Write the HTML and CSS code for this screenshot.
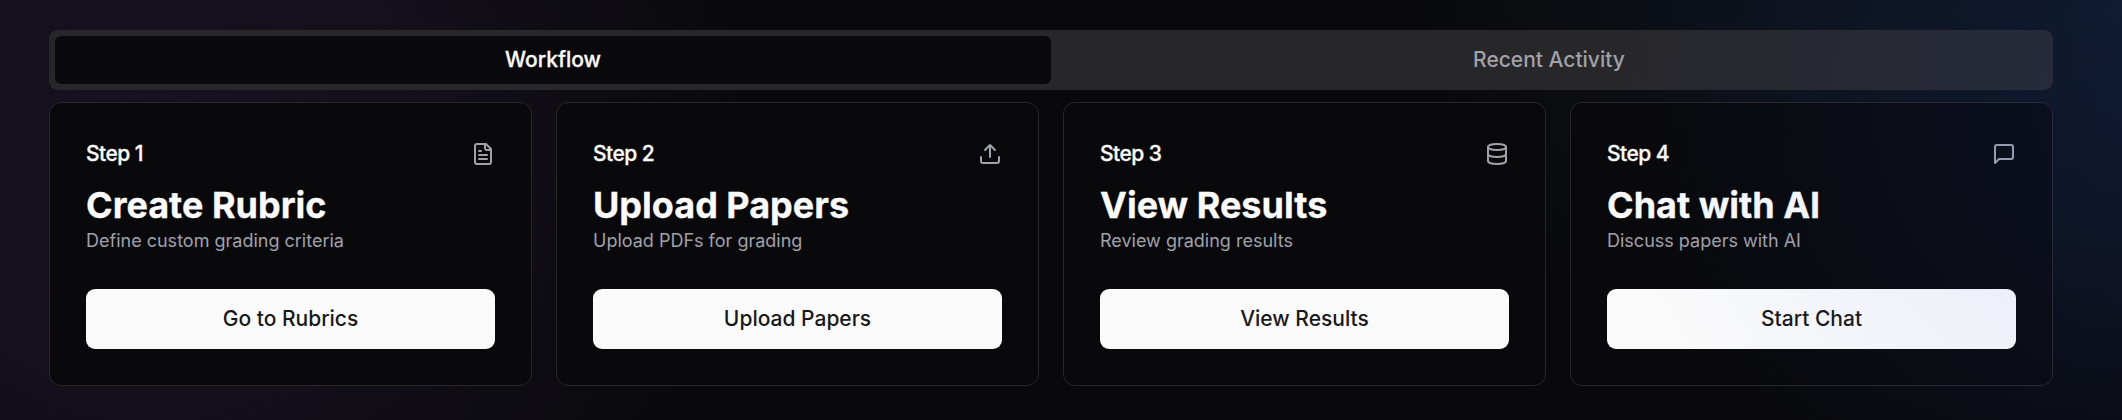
FILE: index.html
```html
<!DOCTYPE html>
<html lang="en">
<head>
<meta charset="utf-8">
<title>Workflow</title>
<link rel="stylesheet" href="styles.css">
</head>
<body>
<main class="dashboard">
  <div class="tabs" role="tablist">
    <button class="tab tab-active" role="tab">Workflow</button>
    <button class="tab" role="tab">Recent Activity</button>
  </div>
  <div class="cards">
    <section class="card">
      <div class="card-head"><span class="step">Step 1</span>
        <svg class="icon" viewBox="0 0 24 24"><path d="M15 2H6a2 2 0 0 0-2 2v16a2 2 0 0 0 2 2h12a2 2 0 0 0 2-2V7Z"/><path d="M14 2v4a2 2 0 0 0 2 2h4M10 9H8M16 13H8M16 17H8"/></svg>
      </div>
      <h2 class="title">Create Rubric</h2>
      <p class="desc">Define custom grading criteria</p>
      <button class="action">Go to Rubrics</button>
    </section>
    <section class="card">
      <div class="card-head"><span class="step">Step 2</span>
        <svg class="icon" viewBox="0 0 24 24"><path d="M21 15v4a2 2 0 0 1-2 2H5a2 2 0 0 1-2-2v-4"/><path d="m17 8-5-5-5 5M12 3v12"/></svg>
      </div>
      <h2 class="title">Upload Papers</h2>
      <p class="desc">Upload PDFs for grading</p>
      <button class="action">Upload Papers</button>
    </section>
    <section class="card">
      <div class="card-head"><span class="step">Step 3</span>
        <svg class="icon" viewBox="0 0 24 24"><ellipse cx="12" cy="5" rx="9" ry="3"/><path d="M3 5v14a9 3 0 0 0 18 0V5"/><path d="M3 12a9 3 0 0 0 18 0"/></svg>
      </div>
      <h2 class="title">View Results</h2>
      <p class="desc">Review grading results</p>
      <button class="action">View Results</button>
    </section>
    <section class="card">
      <div class="card-head"><span class="step">Step 4</span>
        <svg class="icon" viewBox="0 0 24 24"><path d="M21 15a2 2 0 0 1-2 2H7l-4 4V5a2 2 0 0 1 2-2h14a2 2 0 0 1 2 2z"/></svg>
      </div>
      <h2 class="title">Chat with AI</h2>
      <p class="desc">Discuss papers with AI</p>
      <button class="action">Start Chat</button>
    </section>
  </div>
</main>
<div class="glow"></div>
</body>
</html>
```
FILE: styles.css
```css
* { box-sizing: border-box; }

body {
  margin: 0;
  height: 420px;
  overflow: hidden;
  font-family: Inter, "Liberation Sans", sans-serif;
  color: #fafafa;
  background:
    radial-gradient(ellipse 620px 620px at 150px 130px, rgba(110, 60, 154, 0.145), rgba(110, 64, 154, 0.12) 40%, rgba(100, 60, 154, 0.05) 72%, rgba(100, 60, 154, 0) 100%),
    radial-gradient(ellipse 740px 440px at 2122px 0px, rgba(50, 115, 180, 0.11), rgba(50, 110, 180, 0.075) 50%, rgba(50, 100, 180, 0) 100%),
    #09090b;
}

.dashboard {
  display: flex;
  flex-direction: column;
  gap: 12px;
  padding: 30px 69px 34px 49px;
}

.tabs {
  display: grid;
  grid-template-columns: 1fr 1fr;
  height: 60px;
  padding: 6px;
  border-radius: 9px;
  background: #27272a;
}

.tab {
  border: 0;
  border-radius: 6px;
  padding: 0;
  background: transparent;
  color: #a1a1aa;
  font: 500 21px/30px Inter, sans-serif;
}

.tab-active { background: #09090b; color: #fafafa; }

.cards {
  display: grid;
  grid-template-columns: repeat(4, 1fr);
  gap: 24px;
}

.card {
  display: flex;
  flex-direction: column;
  height: 284px;
  padding: 36px;
  border: 1px solid #27272a;
  border-radius: 12px;
  background: #09090b;
}

.card-head {
  display: flex;
  align-items: center;
  justify-content: space-between;
  height: 30px;
  margin-bottom: 12px;
}

.step { font-size: 21px; font-weight: 500; line-height: 30px; letter-spacing: -0.025em; }

.icon {
  width: 24px;
  height: 24px;
  fill: none;
  stroke: #a1a1aa;
  stroke-width: 2;
  stroke-linecap: round;
  stroke-linejoin: round;
}

.tab-active, .step, .title { -webkit-text-stroke: 0.3px #fafafa; }

.title { margin: 0; font-size: 36px; font-weight: 700; line-height: 48px; }

.desc { margin: 0; font-size: 18px; line-height: 24px; color: #a1a1aa; }

.action {
  height: 60px;
  margin-top: 36px;
  padding: 0;
  border: 0;
  border-radius: 9px;
  background: #fafafa;
  color: #18181b;
  font: 500 21px/30px Inter, sans-serif;
}

/* Blue light that spills over the content */
.glow {
  position: absolute;
  inset: 0;
  pointer-events: none;
  background: radial-gradient(ellipse 600px 560px at 2200px 90px, rgba(37, 80, 235, 0.115), rgba(37, 80, 235, 0) 100%);
}
```
